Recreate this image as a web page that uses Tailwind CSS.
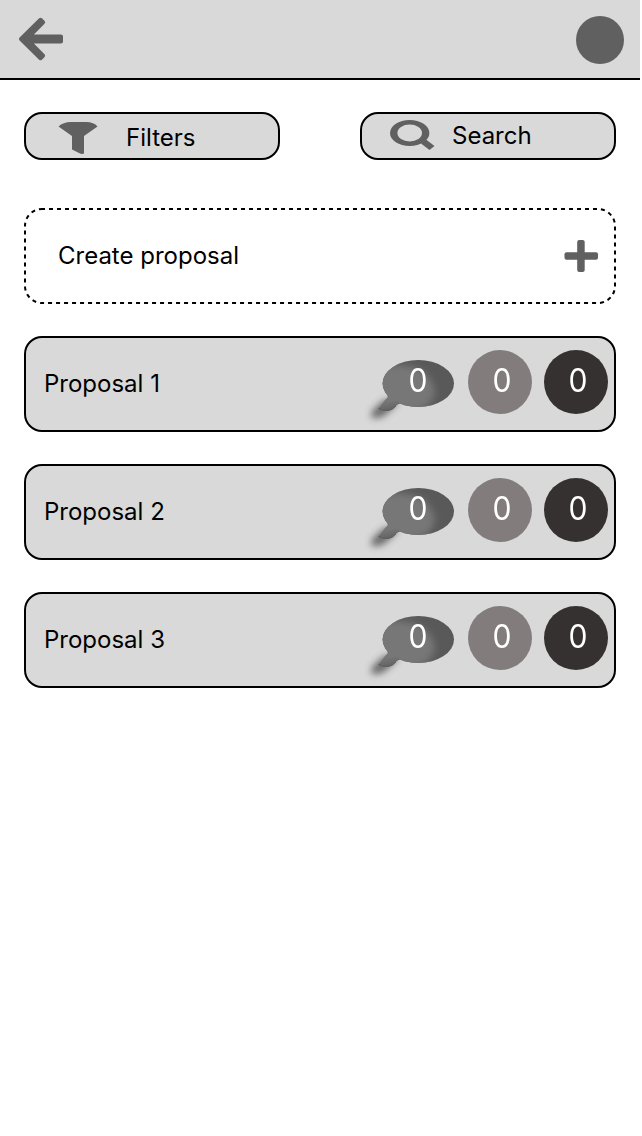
<!DOCTYPE html>
<html lang="en">
<head>
<meta charset="utf-8">
<title>Proposals</title>
<script src="https://cdn.jsdelivr.net/npm/@tailwindcss/browser@4"></script>
</head>
<body class="bg-white font-[Inter,sans-serif] text-2xl font-normal text-black">
<svg class="absolute h-0 w-0" aria-hidden="true">
  <defs>
    <filter id="soft" x="-50%" y="-50%" width="200%" height="200%"><feGaussianBlur stdDeviation="3.500"/></filter>
    <clipPath id="body"><ellipse cx="54.300" cy="33.500" rx="35.700" ry="23.500"/></clipPath>
    <linearGradient id="tail" x1="0" y1="0" x2="0.300" y2="1"><stop offset="0.500" stop-color="#777"/><stop offset="1" stop-color="#636363"/></linearGradient>
    <symbol id="bubble" viewBox="0 0 96 80">
      <path d="M22 49L35 52Q28 59 20 66Q11 70 7 67Q6 60 22 49Z" fill="#444" opacity="0.750" filter="url(#soft)"/>
      <ellipse cx="54.300" cy="33.500" rx="35.700" ry="23.500" fill="#595959"/>
      <g clip-path="url(#body)"><path d="M10 18Q40 10 60 22Q76 38 68 50Q62 62 40 62L10 60Z" fill="#777" filter="url(#soft)"/></g>
      <path d="M25 45L37 53.500Q35 53 33 55Q28 60.500 23 60.500Q18 60.500 14.500 58.500L21 50Q25 47 23 45Z" fill="url(#tail)"/>
      <path d="M14.500 58.500Q18 61 24 60.500Q29 60 32 56" fill="none" stroke="#555" stroke-width="0.800"/>
    </symbol>
  </defs>
</svg>
<div class="w-[640px]">
  <header class="flex h-20 items-center justify-between border-b-2 border-black bg-[#d9d9d9] pr-4 pl-[18px]">
    <svg class="h-12 w-12" viewBox="18 15 48 48" fill="#606060" stroke="#606060" stroke-width="4" stroke-linejoin="round" aria-label="Back">
      <path d="M21 39L40.500 19.800L43.100 22.300L29 36.600H61V41.400H29L43.100 55.700L40.500 58.200Z"/>
    </svg>
    <div class="h-12 w-12 translate-y-px rounded-full bg-[#606060]"></div>
  </header>
  <main class="flex flex-col gap-8 px-6 pt-8">
    <div class="mb-4 flex justify-between">
      <button class="flex h-12 w-64 items-center rounded-[18px] border-2 border-black bg-[#d9d9d9] pl-8 text-left">
        <svg class="h-9 w-10 translate-y-px" viewBox="58 119 40 36" fill="#606060"><path d="M58.500 126.500Q63 122 71 122H86Q94 122 97.500 126.500L84 136V153.500Q82 154.500 79 153L72 149.500V136Z"/></svg>
        <span class="ml-7 translate-y-0.5">Filters</span>
      </button>
      <button class="flex h-12 w-64 items-center rounded-[18px] border-2 border-black bg-[#d9d9d9] pl-7 text-left">
        <svg class="h-9 w-[46px]" viewBox="390 118 46 36" fill="#606060"><path fill-rule="evenodd" d="M390 133a19.700 13 0 1 0 39.400 0a19.700 13 0 1 0-39.400 0ZM397.400 133a12.300 8.500 0 1 0 24.600 0a12.300 8.500 0 1 0-24.600 0Z"/><path d="M426 139.500L434.500 146L429.500 150L421 143.500Z"/></svg>
        <span class="ml-4">Search</span>
      </button>
    </div>
    <div class="relative flex h-24 items-center justify-between pr-[17px] pl-[34px]">
      <svg class="absolute inset-0 h-24 w-[592px]" viewBox="0 0 592 96" fill="none"><rect x="1" y="1" width="590" height="94" rx="17" stroke="#000" stroke-width="2" stroke-dasharray="4 4" stroke-dashoffset="1"/></svg>
      <span>Create proposal</span>
      <svg class="h-9 w-9" viewBox="563 238 36 36" fill="#606060"><rect x="564.500" y="252.200" width="33.500" height="7.500" rx="2"/><rect x="577.200" y="240" width="7.500" height="32" rx="2"/></svg>
    </div>
    <section class="flex h-24 items-center rounded-[18px] border-2 border-black bg-[#d9d9d9] pr-1.5 pl-[18px]">
      <span class="flex-1">Proposal 1</span>
      <div class="flex -translate-y-0.5 items-center gap-3 text-[32px] text-white">
        <div class="relative h-16 w-[92px]"><svg class="absolute inset-0 h-20 w-24"><use href="#bubble"/></svg><span class="absolute top-2.5 left-11 scale-x-[0.94] leading-[42px]">0</span></div>
        <div class="flex h-16 w-16 items-center justify-center rounded-full bg-[#827d7c] pb-0.5 pl-1"><span class="scale-x-[0.94]">0</span></div>
        <div class="flex h-16 w-16 items-center justify-center rounded-full bg-[#353130] pb-0.5 pl-1"><span class="scale-x-[0.94]">0</span></div>
      </div>
    </section>
    <section class="flex h-24 items-center rounded-[18px] border-2 border-black bg-[#d9d9d9] pr-1.5 pl-[18px]">
      <span class="flex-1">Proposal 2</span>
      <div class="flex -translate-y-0.5 items-center gap-3 text-[32px] text-white">
        <div class="relative h-16 w-[92px]"><svg class="absolute inset-0 h-20 w-24"><use href="#bubble"/></svg><span class="absolute top-2.5 left-11 scale-x-[0.94] leading-[42px]">0</span></div>
        <div class="flex h-16 w-16 items-center justify-center rounded-full bg-[#827d7c] pb-0.5 pl-1"><span class="scale-x-[0.94]">0</span></div>
        <div class="flex h-16 w-16 items-center justify-center rounded-full bg-[#353130] pb-0.5 pl-1"><span class="scale-x-[0.94]">0</span></div>
      </div>
    </section>
    <section class="flex h-24 items-center rounded-[18px] border-2 border-black bg-[#d9d9d9] pr-1.5 pl-[18px]">
      <span class="flex-1">Proposal 3</span>
      <div class="flex -translate-y-0.5 items-center gap-3 text-[32px] text-white">
        <div class="relative h-16 w-[92px]"><svg class="absolute inset-0 h-20 w-24"><use href="#bubble"/></svg><span class="absolute top-2.5 left-11 scale-x-[0.94] leading-[42px]">0</span></div>
        <div class="flex h-16 w-16 items-center justify-center rounded-full bg-[#827d7c] pb-0.5 pl-1"><span class="scale-x-[0.94]">0</span></div>
        <div class="flex h-16 w-16 items-center justify-center rounded-full bg-[#353130] pb-0.5 pl-1"><span class="scale-x-[0.94]">0</span></div>
      </div>
    </section>
  </main>
</div>
</body>
</html>
